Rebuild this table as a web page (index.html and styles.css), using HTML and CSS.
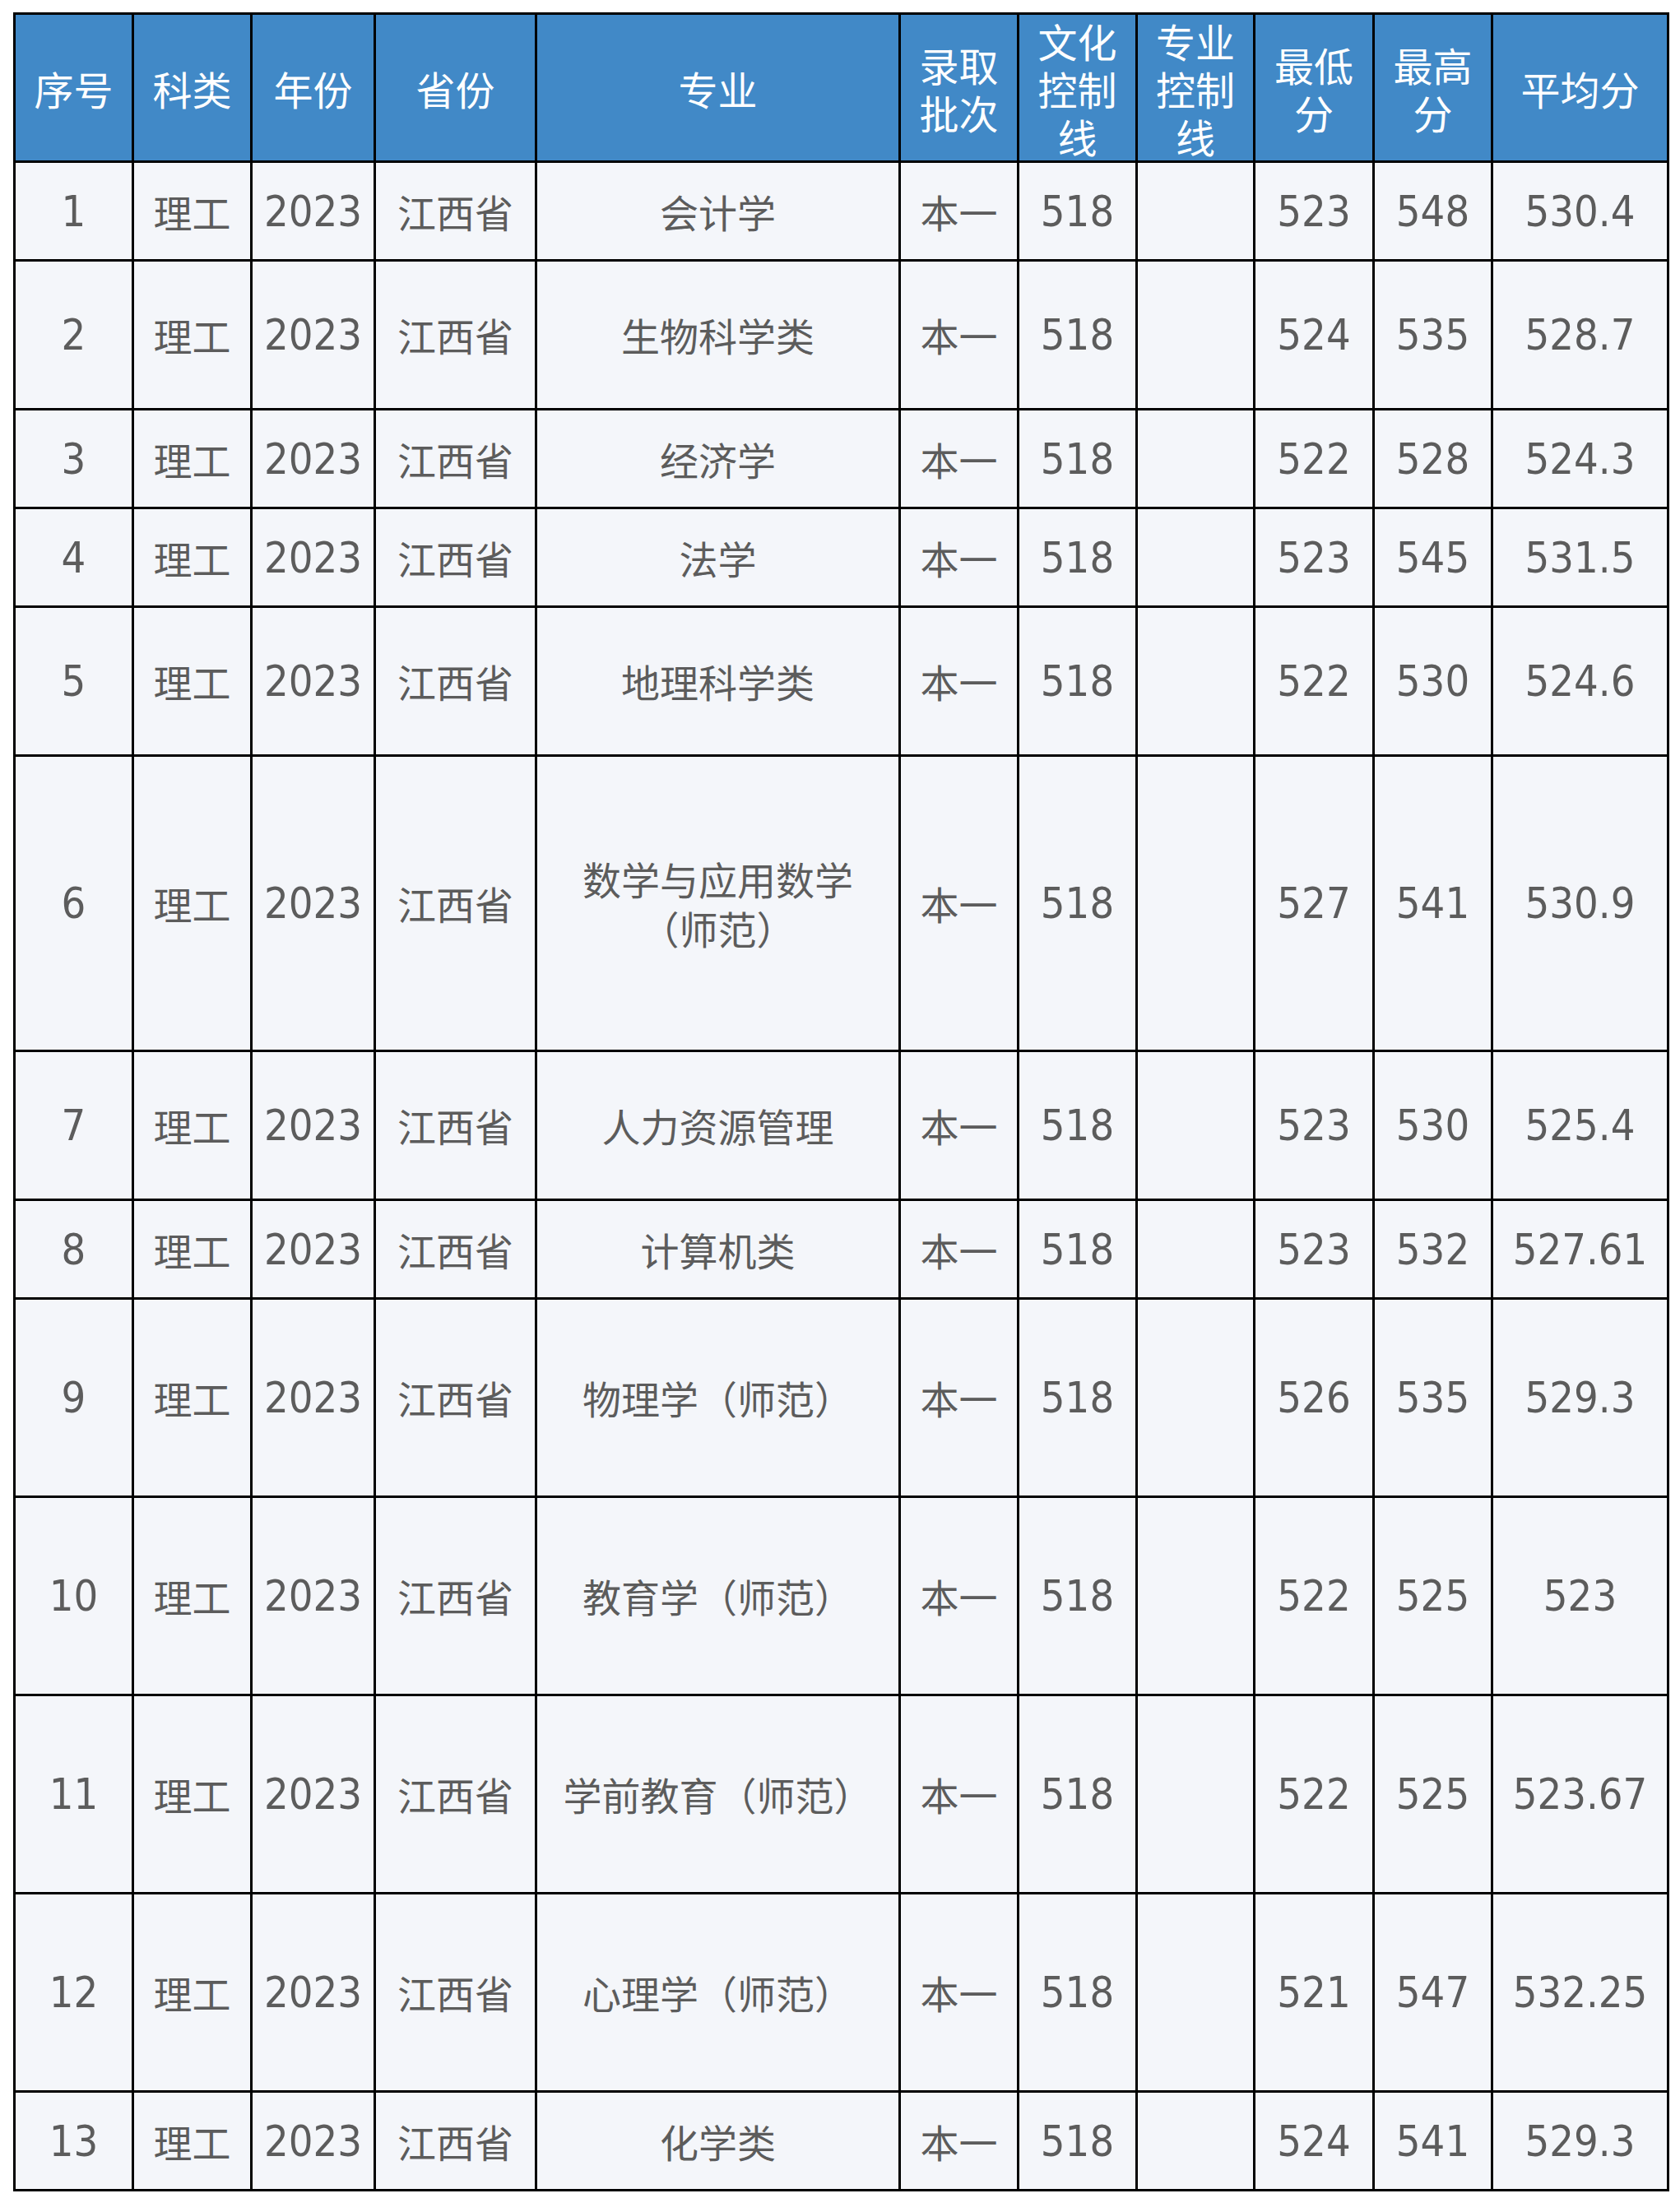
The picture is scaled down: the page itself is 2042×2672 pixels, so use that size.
FILE: index.html
```html
<!DOCTYPE html>
<html lang="zh-CN">
<head>
<meta charset="utf-8">
<title>录取分数</title>
<link rel="stylesheet" href="styles.css">
</head>
<body>
<table class="scores">
  <thead>
    <tr class="head">
      <th class="c-no">序号</th>
      <th class="c-type">科类</th>
      <th class="c-year">年份</th>
      <th class="c-prov">省份</th>
      <th class="c-major">专业</th>
      <th class="c-batch">录取<br>批次</th>
      <th class="c-line">文化<br>控制<br>线</th>
      <th class="c-pline">专业<br>控制<br>线</th>
      <th class="c-min">最低<br>分</th>
      <th class="c-max">最高<br>分</th>
      <th class="c-avg">平均分</th>
    </tr>
  </thead>
  <tbody>
    <tr class="r-s"><td class="num">1</td><td>理工</td><td class="num">2023</td><td>江西省</td><td>会计学</td><td>本一</td><td class="num">518</td><td></td><td class="num">523</td><td class="num">548</td><td class="num">530.4</td></tr>
    <tr class="r-m"><td class="num">2</td><td>理工</td><td class="num">2023</td><td>江西省</td><td>生物科学类</td><td>本一</td><td class="num">518</td><td></td><td class="num">524</td><td class="num">535</td><td class="num">528.7</td></tr>
    <tr class="r-s"><td class="num">3</td><td>理工</td><td class="num">2023</td><td>江西省</td><td>经济学</td><td>本一</td><td class="num">518</td><td></td><td class="num">522</td><td class="num">528</td><td class="num">524.3</td></tr>
    <tr class="r-s"><td class="num">4</td><td>理工</td><td class="num">2023</td><td>江西省</td><td>法学</td><td>本一</td><td class="num">518</td><td></td><td class="num">523</td><td class="num">545</td><td class="num">531.5</td></tr>
    <tr class="r-m"><td class="num">5</td><td>理工</td><td class="num">2023</td><td>江西省</td><td>地理科学类</td><td>本一</td><td class="num">518</td><td></td><td class="num">522</td><td class="num">530</td><td class="num">524.6</td></tr>
    <tr class="r-xl"><td class="num">6</td><td>理工</td><td class="num">2023</td><td>江西省</td><td>数学与应用数学<br>（师范）</td><td>本一</td><td class="num">518</td><td></td><td class="num">527</td><td class="num">541</td><td class="num">530.9</td></tr>
    <tr class="r-m"><td class="num">7</td><td>理工</td><td class="num">2023</td><td>江西省</td><td>人力资源管理</td><td>本一</td><td class="num">518</td><td></td><td class="num">523</td><td class="num">530</td><td class="num">525.4</td></tr>
    <tr class="r-s"><td class="num">8</td><td>理工</td><td class="num">2023</td><td>江西省</td><td>计算机类</td><td>本一</td><td class="num">518</td><td></td><td class="num">523</td><td class="num">532</td><td class="num">527.61</td></tr>
    <tr class="r-l"><td class="num">9</td><td>理工</td><td class="num">2023</td><td>江西省</td><td>物理学（师范）</td><td>本一</td><td class="num">518</td><td></td><td class="num">526</td><td class="num">535</td><td class="num">529.3</td></tr>
    <tr class="r-l"><td class="num">10</td><td>理工</td><td class="num">2023</td><td>江西省</td><td>教育学（师范）</td><td>本一</td><td class="num">518</td><td></td><td class="num">522</td><td class="num">525</td><td class="num">523</td></tr>
    <tr class="r-l"><td class="num">11</td><td>理工</td><td class="num">2023</td><td>江西省</td><td>学前教育（师范）</td><td>本一</td><td class="num">518</td><td></td><td class="num">522</td><td class="num">525</td><td class="num">523.67</td></tr>
    <tr class="r-l"><td class="num">12</td><td>理工</td><td class="num">2023</td><td>江西省</td><td>心理学（师范）</td><td>本一</td><td class="num">518</td><td></td><td class="num">521</td><td class="num">547</td><td class="num">532.25</td></tr>
    <tr class="r-s"><td class="num">13</td><td>理工</td><td class="num">2023</td><td>江西省</td><td>化学类</td><td>本一</td><td class="num">518</td><td></td><td class="num">524</td><td class="num">541</td><td class="num">529.3</td></tr>
  </tbody>
</table>
</body>
</html>
```

FILE: styles.css
```css
html, body {
  margin: 0;
  background: #ffffff;
}

body {
  padding: 15px 0 0 16px;
}

.scores {
  table-layout: fixed;
  border-collapse: separate;
  border-spacing: 3px;
  background: #000000;
  width: 2013px;
  font-family: "Noto Sans CJK SC", "Noto Sans", sans-serif;
  color: #5c5c5c;
}

.scores th,
.scores td {
  padding: 0;
  text-align: center;
  vertical-align: middle;
  white-space: nowrap;
}

.scores th {
  background: #4189c7;
  color: #ffffff;
  font-weight: 400;
  font-size: 48px;
  line-height: 58px;
  height: 177px;
}

.scores td {
  background: #f4f6fa;
  font-size: 47px;
  line-height: 60px;
}

.scores td.num {
  font-family: "DejaVu Sans Condensed", "DejaVu Sans", sans-serif;
  font-size: 52px;
}

.c-no { width: 141px; }
.c-type { width: 141px; }
.c-year { width: 147px; }
.c-prov { width: 193px; }
.c-major { width: 439px; }
.c-batch { width: 141px; }
.c-line { width: 141px; }
.c-pline { width: 140px; }
.c-min { width: 142px; }
.c-max { width: 141px; }
.c-avg { width: 211px; }

.r-s td { height: 117px; }
.r-m td { height: 178px; }
.r-l td { height: 238px; }
.r-xl td { height: 356px; }
```
